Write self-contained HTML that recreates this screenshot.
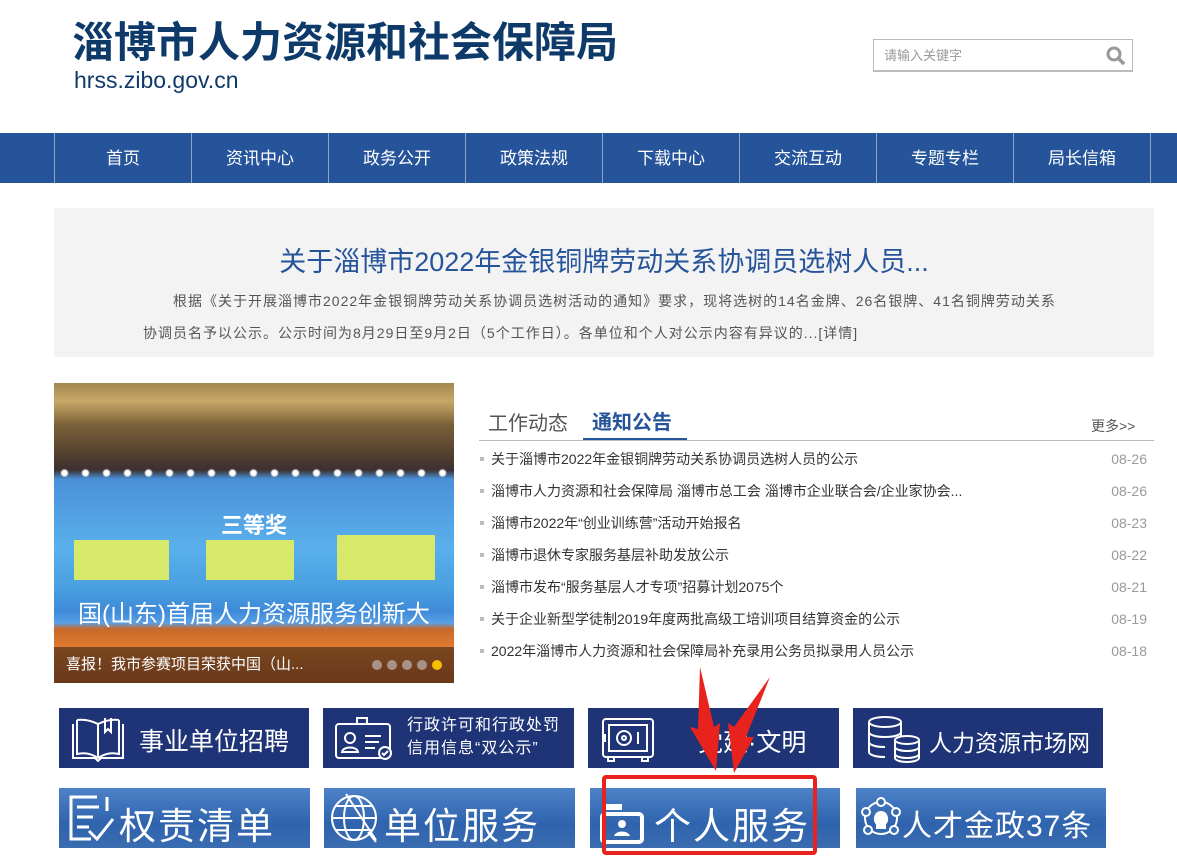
<!DOCTYPE html>
<html><head><meta charset="utf-8">
<style>
*{margin:0;padding:0;box-sizing:border-box}
body{width:1177px;height:859px;overflow:hidden;background:#fff;font-family:"Liberation Sans","Noto Sans CJK SC",sans-serif;position:relative}
.abs{position:absolute}
.nav{left:0;top:133px;width:1177px;height:50px;background:#26549a}
.nav div{position:absolute;top:0;height:50px;width:137px;border-left:1px solid #8ea6cc;color:#fff;font-size:17px;text-align:center;line-height:52px}
.list li{list-style:none;position:absolute;left:0;width:674px;font-size:14px;color:#333;height:32px;line-height:32px;padding-left:12px}
.list li:before{content:"";position:absolute;left:1px;top:14px;width:4px;height:4px;background:#bbb}
.list li span{position:absolute;right:6px;color:#999;font-size:14px}
.b1{position:absolute;top:708px;height:60px;background:#1f3477;color:#fff}
.b2{position:absolute;top:788px;height:60px;background:linear-gradient(180deg,#4d82c8,#2f63ad 60%,#3a6cb0);color:#fff}
</style></head><body>
<div class="abs" style="left:72px;top:16px;font-size:42px;font-weight:bold;color:#0e3a6a;letter-spacing:0;line-height:54px">淄博市人力资源和社会保障局</div>
<div class="abs" style="left:74px;top:66px;font-size:23px;color:#0e3a6a;line-height:28px">hrss.zibo.gov.cn</div>
<div class="abs" style="left:873px;top:39px;width:260px;height:33px;border:1px solid #bbb;border-bottom-width:2px;font-size:13px;color:#999;line-height:31px;padding-left:10px">请输入关键字
<svg class="abs" style="right:6px;top:6px" width="20" height="20" viewBox="0 0 20 20"><circle cx="8" cy="8" r="6" fill="none" stroke="#999" stroke-width="3"/><path d="M12 12l6 6" stroke="#999" stroke-width="3.5"/></svg></div>

<div class="abs nav">
<div style="left:54px">首页</div><div style="left:191px">资讯中心</div><div style="left:328px">政务公开</div><div style="left:465px">政策法规</div><div style="left:602px">下载中心</div><div style="left:739px">交流互动</div><div style="left:876px">专题专栏</div><div style="left:1013px">局长信箱</div><div style="left:1150px;width:27px"></div>
</div>

<div class="abs" style="left:54px;top:208px;width:1100px;height:149px;background:#f3f3f3"></div>
<div class="abs" style="left:54px;top:242px;width:1100px;text-align:center;font-size:27px;color:#26549a;line-height:40px">关于淄博市2022年金银铜牌劳动关系协调员选树人员...</div>
<div class="abs" style="left:143px;top:285px;width:918px;font-size:14px;color:#555;line-height:32px;text-indent:30px;letter-spacing:1px">根据《关于开展淄博市2022年金银铜牌劳动关系协调员选树活动的通知》要求，现将选树的14名金牌、26名银牌、41名铜牌劳动关系协调员名予以公示。公示时间为8月29日至9月2日（5个工作日）。各单位和个人对公示内容有异议的...[详情]</div>

<div class="abs" style="left:54px;top:383px;width:400px;height:300px;overflow:hidden;background:linear-gradient(180deg,#a08850 0%,#c8a868 6%,#7a6038 14%,#5a4630 22%,#3c3030 29%,#4a90d8 32%,#5ab0ec 55%,#4aa0e0 68%,#3e8ad8 76%,#5aa0e4 80%,#c8692a 82%,#e07a30 88%,#b85a24 100%)">
<div class="abs" style="left:0;top:84px;width:400px;height:12px;background:radial-gradient(circle,#fff 2.5px,transparent 4.5px) 0 0/21px 12px"></div>
<div class="abs" style="left:150px;top:125px;width:100px;text-align:center;color:#fff;font-size:22px;font-weight:bold">三等奖</div>
<div class="abs" style="left:20px;top:157px;width:95px;height:40px;background:#d8e86a"></div>
<div class="abs" style="left:152px;top:157px;width:88px;height:40px;background:#d8e86a"></div>
<div class="abs" style="left:283px;top:152px;width:98px;height:45px;background:#d8e86a"></div>
<div class="abs" style="left:0;top:211px;width:400px;text-align:center;color:#fff;font-size:24px;white-space:nowrap">国(山东)首届人力资源服务创新大</div>
<div class="abs" style="left:0;top:264px;width:400px;height:36px;background:rgba(40,30,20,.55);color:#fff;font-size:15px;line-height:36px;padding-left:12px">喜报！我市参赛项目荣获中国（山...
<span class="abs" style="left:318px;top:13px;width:10px;height:10px;border-radius:5px;background:#ccc;opacity:.6"></span><span class="abs" style="left:333px;top:13px;width:10px;height:10px;border-radius:5px;background:#ccc;opacity:.6"></span><span class="abs" style="left:348px;top:13px;width:10px;height:10px;border-radius:5px;background:#ccc;opacity:.6"></span><span class="abs" style="left:363px;top:13px;width:10px;height:10px;border-radius:5px;background:#ccc;opacity:.6"></span><span class="abs" style="left:378px;top:13px;width:10px;height:10px;border-radius:5px;background:#f5c000"></span></div>
</div>

<div class="abs" style="left:488px;top:407px;font-size:20px;color:#555">工作动态</div>
<div class="abs" style="left:592px;top:406px;font-size:20px;color:#26549a;font-weight:bold">通知公告</div>
<div class="abs" style="left:583px;top:438px;width:104px;height:3px;background:#26549a"></div>
<div class="abs" style="left:479px;top:440px;width:675px;height:1px;background:#bbb"></div>
<div class="abs" style="left:1091px;top:416px;font-size:14px;color:#555">更多&gt;&gt;</div>
<ul class="abs list" style="left:479px;top:443px;width:675px">
<li style="top:0">关于淄博市2022年金银铜牌劳动关系协调员选树人员的公示<span>08-26</span></li>
<li style="top:32px">淄博市人力资源和社会保障局 淄博市总工会 淄博市企业联合会/企业家协会...<span>08-26</span></li>
<li style="top:64px">淄博市2022年“创业训练营”活动开始报名<span>08-23</span></li>
<li style="top:96px">淄博市退休专家服务基层补助发放公示<span>08-22</span></li>
<li style="top:128px">淄博市发布“服务基层人才专项”招募计划2075个<span>08-21</span></li>
<li style="top:160px">关于企业新型学徒制2019年度两批高级工培训项目结算资金的公示<span>08-19</span></li>
<li style="top:192px">2022年淄博市人力资源和社会保障局补充录用公务员拟录用人员公示<span>08-18</span></li>
</ul>

<div class="b1" style="left:59px;width:250px"><svg class="abs" style="left:10px;top:8px" width="58" height="46" viewBox="0 0 58 46" fill="none" stroke="#fff" stroke-width="2"><path d="M4 8v34h22l3 3 3-3h22V8M8 4v34c8-2 15 0 21 4M50 4v34c-8-2-15 0-21 4M29 8v34M8 4c8-1 15 1 21 4 6-3 13-5 21-4"/><path d="M36 2v14l3-3 3 3V2"/></svg><div class="abs" style="left:80px;top:14px;font-size:25px">事业单位招聘</div></div>
<div class="b1" style="left:323px;width:251px"><svg class="abs" style="left:10px;top:8px" width="62" height="46" viewBox="0 0 62 46" fill="none" stroke="#fff" stroke-width="2"><rect x="3" y="8" width="54" height="34" rx="3"/><rect x="24" y="2" width="10" height="6"/><circle cx="17" cy="22" r="5"/><path d="M9 36c1-6 15-6 16 0z"/><path d="M32 20h16M32 26h14M32 32h10"/><circle cx="52" cy="37" r="6" fill="#1f3477"/><path d="M49 37l2 2 4-4"/></svg><div class="abs" style="left:84px;top:6px;font-size:16px;line-height:23px;letter-spacing:1px">行政许可和行政处罚<br>信用信息“双公示”</div></div>
<div class="b1" style="left:588px;width:251px"><svg class="abs" style="left:12px;top:8px" width="56" height="48" viewBox="0 0 56 48" fill="none" stroke="#fff" stroke-width="2"><rect x="3" y="3" width="50" height="38" rx="3"/><rect x="9" y="9" width="38" height="26"/><circle cx="24" cy="22" r="7"/><circle cx="24" cy="22" r="2"/><path d="M38 16v12M8 41v4h6v-4M42 41v4h6v-4M5 18v8"/></svg><div class="abs" style="left:110px;top:15px;font-size:25px">党建·文明</div></div>
<div class="b1" style="left:853px;width:250px"><svg class="abs" style="left:12px;top:6px" width="58" height="50" viewBox="0 0 58 50" fill="none" stroke="#fff" stroke-width="2"><ellipse cx="20" cy="8" rx="16" ry="5"/><path d="M4 8v30c0 3 7 5 16 5M4 18c0 3 7 5 16 5s16-2 16-5M4 28c0 3 7 5 16 5M36 8v14"/><ellipse cx="42" cy="26" rx="12" ry="4"/><path d="M30 26v18c0 2 5 4 12 4s12-2 12-4V26M30 33c0 2 5 4 12 4s12-2 12-4M30 40c0 2 5 4 12 4s12-2 12-4"/></svg><div class="abs" style="left:76px;top:16px;font-size:23px">人力资源市场网</div></div>

<div class="b2" style="left:59px;width:251px"><svg class="abs" style="left:8px;top:5px" width="50" height="52" viewBox="0 0 50 52" fill="none" stroke="#fff" stroke-width="3"><path d="M30 4H4v42h20M40 4v14"/><path d="M10 14h22M10 24h16M10 34h12"/><path d="M22 38l8 8 16-20"/></svg><div class="abs" style="left:60px;top:8px;font-size:37px;letter-spacing:2px">权责清单</div></div>
<div class="b2" style="left:324px;width:251px"><svg class="abs" style="left:4px;top:4px" width="54" height="54" viewBox="0 0 54 54" fill="none" stroke="#fff" stroke-width="2"><circle cx="26" cy="26" r="22"/><ellipse cx="26" cy="26" rx="10" ry="22"/><path d="M4 26h44M8 14h36M8 38h36M18 2l30 46"/><path d="M40 40l8 10"/></svg><div class="abs" style="left:60px;top:8px;font-size:37px;letter-spacing:2px">单位服务</div></div>
<div class="b2" style="left:590px;width:250px"><svg class="abs" style="left:10px;top:12px" width="44" height="44" viewBox="0 0 44 44" fill="#fff"><rect x="2" y="4" width="20" height="6"/><rect x="2" y="14" width="40" height="28" rx="3" fill="none" stroke="#fff" stroke-width="4"/><circle cx="22" cy="24" r="4"/><path d="M14 36c2-6 14-6 16 0z"/></svg><div class="abs" style="left:64px;top:8px;font-size:37px;letter-spacing:2px">个人服务</div></div>
<div class="b2" style="left:856px;width:250px"><svg class="abs" style="left:4px;top:8px" width="42" height="44" viewBox="0 0 42 44" fill="none" stroke="#fff" stroke-width="2"><circle cx="21" cy="22" r="16"/><circle cx="21" cy="6" r="4" fill="#3a6cb0"/><circle cx="6" cy="16" r="4" fill="#3a6cb0"/><circle cx="36" cy="16" r="4" fill="#3a6cb0"/><circle cx="8" cy="34" r="4" fill="#3a6cb0"/><circle cx="34" cy="34" r="4" fill="#3a6cb0"/><path d="M17 28c-4-4-2-12 4-12s8 8 4 12v4h-8z" fill="#fff"/></svg><div class="abs" style="left:46px;top:13px;font-size:30px;letter-spacing:1px">人才金政37条</div></div>

<div class="abs" style="left:602px;top:775px;width:215px;height:80px;border:4px solid #e8221c;border-radius:4px"></div>
<svg class="abs" style="left:660px;top:665px" width="120" height="110" viewBox="0 0 120 110"><path d="M40 2l14 60 6-4-4 48-26-44 8 2z" fill="#e8221c"/><path d="M110 12l-24 60 8 0-20 36 -6-50 6 4z" fill="#e8221c"/></svg>
</body></html>
